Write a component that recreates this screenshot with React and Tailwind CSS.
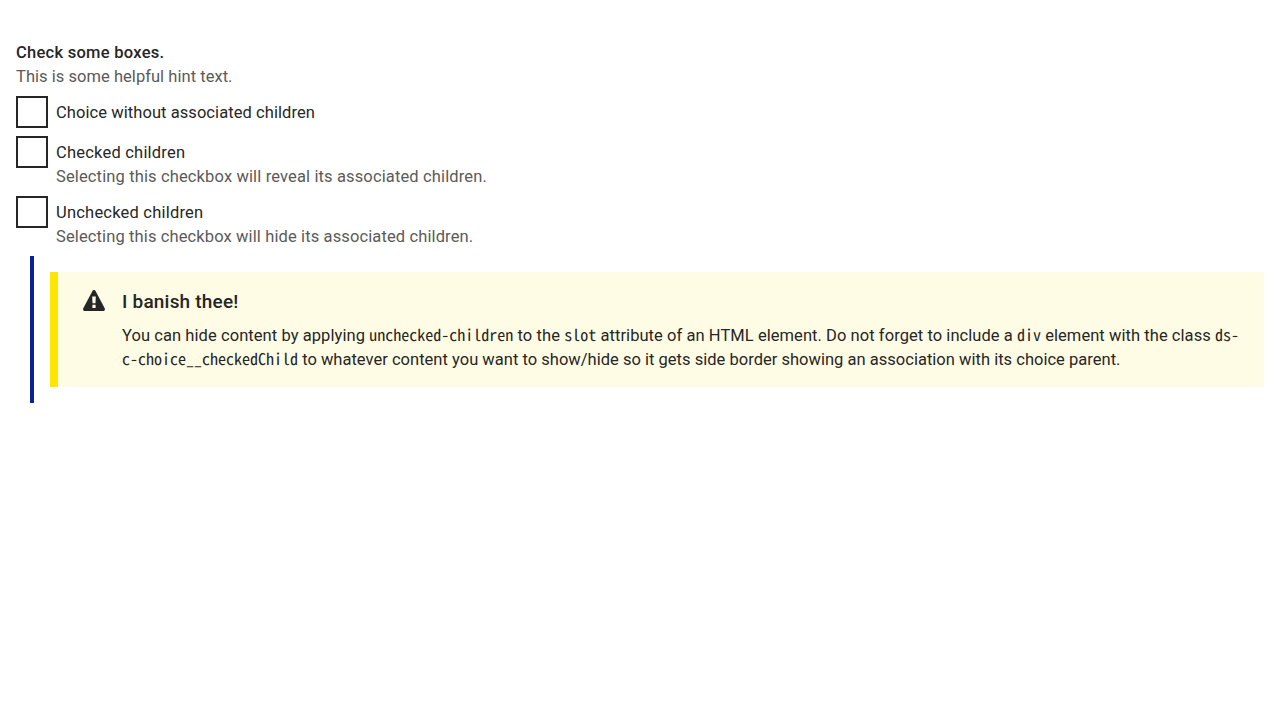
import React from 'react';

const choices = [
  { label: 'Choice without associated children', track: 'tracking-[0.07px]' },
  {
    label: 'Checked children',
    track: 'tracking-[0.21px]',
    hint: 'Selecting this checkbox will reveal its associated children.',
    hintTrack: 'tracking-[0.135px]',
  },
  {
    label: 'Unchecked children',
    track: 'tracking-[0.21px]',
    hint: 'Selecting this checkbox will hide its associated children.',
    hintTrack: 'tracking-[0.12px]',
  },
];

function Choice({ label, track, hint, hintTrack }) {
  return (
    <label className="mt-2 flex gap-2">
      <span className="size-8 shrink-0 border-2 border-[#262626] bg-white" />
      <span className="-mb-px flex flex-col pt-[5px] whitespace-nowrap">
        <span className={track}>{label}</span>
        {hint && <span className={`text-[#5a5a5a] ${hintTrack}`}>{hint}</span>}
      </span>
    </label>
  );
}

function Code({ children }) {
  return (
    <code className="text-[16px] leading-none tracking-normal [font-family:'Noto_Sans_Mono_CJK_SC','Noto_Sans_Mono_CJK_JP',monospace] [text-rendering:geometricPrecision]">
      {children}
    </code>
  );
}

function WarningIcon() {
  return (
    <svg className="mt-[2px] ml-[1px] h-[21px] w-[22px] shrink-0" viewBox="0 0 22 20" preserveAspectRatio="none" fill="#262626">
      <path
        fillRule="evenodd"
        d="M9.6.8a1.6 1.6 0 0 1 2.8 0l9.3 16.6c.6 1.2-.1 2.6-1.4 2.6H1.7C.4 20-.3 18.6.3 17.4ZM9.2 6.3l.3 6.2h3l.3-6.2ZM9.4 14v3.2h3.2V14Z"
      />
    </svg>
  );
}

export default function App() {
  return (
    <main className="px-4 pt-[41px] text-[16.5px] leading-6 text-[#262626] [font-family:Roboto,sans-serif]">
      <p className="font-medium tracking-[0.27px]">Check some boxes.</p>
      <p className="-mb-px tracking-[0.04px] text-[#5a5a5a]">This is some helpful hint text.</p>
      {choices.map((choice) => (
        <Choice key={choice.label} {...choice} />
      ))}
      <div className="mt-2 ml-[14px] border-l-4 border-[#0b1f99] py-4 pl-4">
        <section className="flex h-[115px] gap-[17px] border-l-8 border-[#ffe500] bg-[#fffce5] pt-4 pl-6">
          <WarningIcon />
          <div className="pt-px whitespace-nowrap">
            <h2 className="mb-[9px] h-[26px] text-[19px] leading-[26px] font-medium tracking-[0.2px]">I banish thee!</h2>
            <p className="h-6 whitespace-pre">
              <span className="tracking-[0.07px]">You can hide content by applying </span>
              <Code>unchecked-children</Code>
              <span className="tracking-[0.12px]"> to the </span>
              <Code>slot</Code>
              <span className="tracking-[0.06px]"> attribute of an HTML element. Do not forget to include a </span>
              <Code>div</Code>
              <span className="tracking-[0.06px]"> element with the class </span>
              <Code>ds-</Code>
            </p>
            <p className="h-6 whitespace-pre">
              <Code>c-choice__checkedChild</Code>
              <span className="tracking-[0.02px]"> to whatever content you want to show/hide so it gets side border showing an association with its choice parent.</span>
            </p>
          </div>
        </section>
      </div>
    </main>
  );
}
